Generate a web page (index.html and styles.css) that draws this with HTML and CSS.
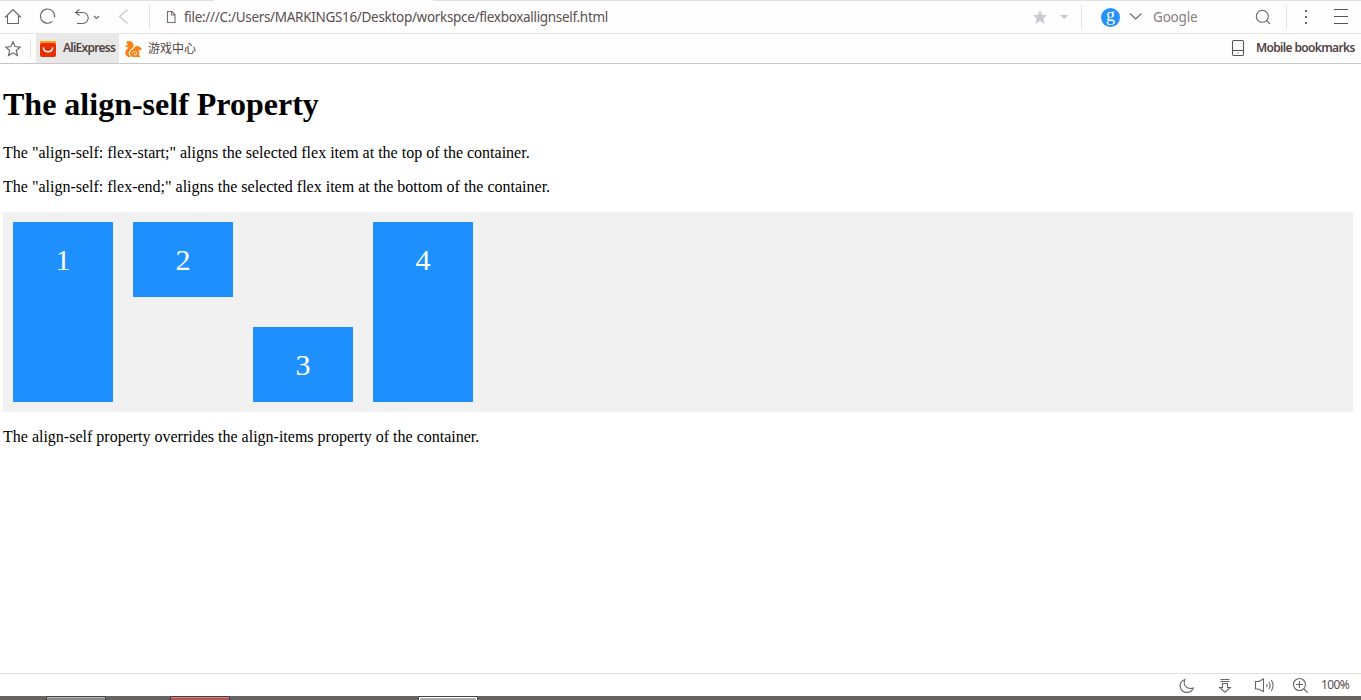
FILE: index.html
```html
<!DOCTYPE html>
<html lang="en">
<head>
<meta charset="utf-8">
<title>The align-self Property</title>
<link rel="stylesheet" href="styles.css">
</head>
<body>
<div class="tabs-edge"><span class="active-tab"></span></div>
<header class="toolbar">
  <svg class="icon" width="30" height="32" viewBox="0 1 30 32"><path d="M5 17.5 13 9.5 21 17.5M7.5 16V23.5H18.5V16"/></svg>
  <svg class="icon" width="35" height="32" viewBox="30 1 35 32"><path d="M52.4 21.3A7.1 7.1 0 1 1 54.5 17.3"/></svg>
  <svg class="icon" width="44" height="32" viewBox="65 1 44 32"><path d="M75.5 12.5H82.7A5.5 5.5 0 0 1 82.7 23.5H77M79.5 9.5 75.5 12.5 79.5 15.5"/><path d="M94 16 96.5 18.5 99 16"/></svg>
  <svg class="icon pale" width="40" height="32" viewBox="109 1 40 32"><path d="M127.5 9.5 119.5 16.5 127.5 23.5"/></svg>
  <span class="divider"></span>
  <svg class="icon brown" width="34" height="32" viewBox="150 1 34 32"><path d="M167.5 11.5H172L175 14.5V22.5H167.5ZM171.5 11.5V15H175"/></svg>
  <span class="url">file:///C:/Users/MARKINGS16/Desktop/workspce/flexboxallignself.html</span>
  <svg width="57" height="32" viewBox="1024 1 57 32" fill="#c7cad3"><path d="M1040 10 1042 14.8 1047.2 15.2 1043.2 18.6 1044.5 23.8 1040 21 1035.5 23.8 1036.8 18.6 1032.8 15.2 1038 14.8Z"/><path d="M1060 15H1068.5L1064.2 19Z"/></svg>
  <span class="divider"></span>
  <span class="engine">g</span>
  <svg class="icon" width="33" height="32" viewBox="1120 1 33 32"><path d="M1130 13.5 1135.7 19 1141.4 13.5"/></svg>
  <span class="query">Google</span>
  <svg class="icon" width="36" height="32" viewBox="1250 1 36 32"><circle cx="1262.3" cy="16.3" r="6"/><path d="M1266.7 20.7 1270 24"/></svg>
  <span class="divider"></span>
  <svg width="37" height="32" viewBox="1287 1 37 32" fill="#666"><path d="M1305 10h2v2h-2zM1305 16h2v2h-2zM1305 22h2v2h-2z"/></svg>
  <svg class="icon dark" width="37" height="32" viewBox="1324 1 37 32"><path d="M1334 9.5H1348M1334 16.5H1348M1334 23.5H1348"/></svg>
</header>
<nav class="bookmarks">
  <svg class="icon" width="30" height="29" viewBox="0 34 30 29"><path d="M13 41.8 15.1 46.6 20.2 47.1 16.3 50.5 17.5 55.5 13 52.8 8.5 55.5 9.7 50.5 5.8 47.1 10.9 46.6Z"/></svg>
  <span class="divider mini"></span>
  <span class="bookmark selected">
    <svg width="16" height="16" viewBox="0 0 16 16"><rect width="16" height="16" rx="2" fill="#e62e04"/><path d="M0 3V2Q0 0 2 0H14Q16 0 16 2V3Q14 2 12 2H4Q2 2 0 3Z" fill="#ff9a15"/><path d="M3.3 6.3C4 12.3 12 12.3 12.7 6.3" fill="none" stroke="#fff" stroke-width="1.5"/></svg>
    <span class="ali">AliExpress</span>
  </span>
  <span class="bookmark games">
    <svg width="17" height="16" viewBox="125 40 17 16"><path d="M126.6 40.4C130 39.4 133.6 41.2 133.6 44.4 133.6 47.4 129.4 48.4 128.8 51.4 128.5 53.2 129.4 54.8 131 56H128.4C125.4 54.8 124.4 51.4 126.2 49L128.6 46.4C127.2 46.6 125.8 46 125 44.8 126.4 44.8 127.4 44.4 128 43.6 127 43.2 126.4 42 126.6 40.4Z" fill="#f58213"/><path d="M129.9 52.2C130 49 133.8 48.4 134.4 46.2 135.6 45 137.4 44.6 139 45.4L141.8 47.6C141.6 49 140 49.6 138 49.4 139.6 50.8 139.8 52.6 139 54.2L140.8 56H132.8C131 55.4 129.9 54 129.9 52.2Z" fill="#f58213"/><path d="M132 52.4C132 50 136.6 49.8 136.8 52.4 136.8 54.4 133.8 54.4 134 52.6" fill="none" stroke="#fff" stroke-width=".9"/></svg>
    <span class="cn">游戏中心</span>
  </span>
  <span class="spacer"></span>
  <svg class="icon dark" width="32" height="29" viewBox="1224 34 32 29"><rect x="1232.5" y="40.5" width="11" height="15" rx="1.2"/><path d="M1232.5 50.5H1243.5"/><path d="M1237.5 53H1238.5"/></svg>
  <span class="mobile">Mobile bookmarks</span>
</nav>
<main class="page">
  <h1 class="title">The align-self Property</h1>
  <p class="text">The "align-self: flex-start;" aligns the selected flex item at the top of the container.</p>
  <p class="text">The "align-self: flex-end;" aligns the selected flex item at the bottom of the container.</p>
  <div class="flex-container">
    <div class="item">1</div>
    <div class="item start">2</div>
    <div class="item end">3</div>
    <div class="item">4</div>
  </div>
  <p class="text">The align-self property overrides the align-items property of the container.</p>
</main>
<footer class="status">
  <svg class="icon" width="36" height="22" viewBox="1170 674 36 22"><path d="M1184.8 679.5C1177.5 682.5 1179.5 692.5 1187 692.4 1190 692.4 1192.3 690.8 1193.2 688 1187 690 1182.5 685.2 1184.8 679.5Z"/></svg>
  <svg class="icon" width="38" height="22" viewBox="1206 674 38 22"><path d="M1220.5 679.5H1229.5M1220.5 681.5H1229.5M1222.5 683.5H1227.5V687.5H1230.3L1225 692.3 1219.7 687.5H1222.5Z"/></svg>
  <svg class="icon" width="43" height="22" viewBox="1244 674 43 22"><path d="M1255.5 681.5H1258.5L1263.5 679V691.5L1258.5 689H1255.5ZM1266.5 684Q1267.7 685.5 1266.5 687.2M1269 682Q1271.3 685.5 1269 689M1271.3 680Q1274.8 685.5 1271.3 691"/></svg>
  <svg class="icon" width="34" height="22" viewBox="1287 674 34 22"><circle cx="1299.5" cy="684.5" r="6"/><path d="M1299.5 681V688M1296 684.5H1303M1304 689 1307.5 692.5"/></svg>
  <span class="zoom">100%</span>
</footer>
<div class="taskbar"><span class="task"></span><span class="task alert"></span><span class="task current"></span></div>
</body>
</html>
```
FILE: styles.css
```css
* { box-sizing: border-box; }
body {
  margin: 0;
  width: 1361px;
  height: 700px;
  overflow: hidden;
  display: flex;
  flex-direction: column;
  background: #fff;
}
svg { display: block; flex: none; }
.icon { fill: none; stroke: #666; stroke-width: 1.1; }
.pale { stroke: #c4c4c4; }
.brown { stroke: #776d6d; }
.dark { stroke: #555; }
.tabs-edge { height: 1px; background: #dfdfe4; flex: none; }
.active-tab { display: block; width: 219px; height: 1px; margin-left: 214px; background: #fff; }
.toolbar {
  height: 33px;
  flex: none;
  display: flex;
  align-items: center;
  border-bottom: 1px solid #e6e6e6;
  background: #fefefe;
  font: 13.5px/20px "Noto Sans", sans-serif;
  white-space: nowrap;
}
.divider { width: 1px; height: 24px; background: #e2e2e5; flex: none; }
.url { width: 840px; color: #5a4f4f; letter-spacing: -0.31px; }
.engine {
  width: 19px;
  height: 19px;
  margin: 0 0 0 19px;
  border-radius: 50%;
  background: #2592fb;
  color: #fff;
  text-align: center;
  font: 18px/14px "Liberation Serif", serif;
}
.query { width: 97px; color: #858080; letter-spacing: -0.2px; }
.bookmarks {
  height: 30px;
  flex: none;
  display: flex;
  align-items: center;
  border-bottom: 1px solid #c8c8c8;
  background: #fefefe;
  color: #51433f;
  font: 12px/18px "Noto Sans", sans-serif;
  white-space: nowrap;
}
.mini { height: 20px; }
.bookmark { height: 29px; display: flex; align-items: center; }
.selected { width: 83px; margin-left: 5px; padding-left: 4px; gap: 7px; background: #e8e8e8; }
.ali, .mobile { padding-bottom: 2px; font-weight: 600; }
.ali { letter-spacing: -0.75px; }
.games { margin-left: 6px; gap: 6px; }
.cn { padding-bottom: 2px; font-family: "Noto Sans CJK SC", sans-serif; }
.spacer { flex: 1; }
.mobile { width: 105px; letter-spacing: -0.65px; }
.page {
  flex: 1;
  min-height: 0;
  padding: 23px 8px 0 3px;
  color: #000;
  font: 16px/17px "Liberation Serif", "Times New Roman", serif;
}
.title { margin: 0 0 22px; font-size: 32px; line-height: 35px; }
.text { margin: 0 0 17px; white-space: nowrap; }
.flex-container { display: flex; height: 200px; margin-bottom: 16px; background: #f1f1f1; }
.item {
  width: 100px;
  margin: 10px;
  background: #1e90ff;
  color: #fff;
  text-align: center;
  font-size: 30px;
  line-height: 75px;
}
.start { align-self: flex-start; }
.end { align-self: flex-end; }
.status {
  height: 23px;
  flex: none;
  display: flex;
  align-items: center;
  justify-content: flex-end;
  border-top: 1px solid #e0e0e0;
  color: #5a4f4f;
  font: 12px/16px "Noto Sans", sans-serif;
}
.zoom { width: 40px; letter-spacing: -0.6px; }
.taskbar { height: 4px; flex: none; display: flex; background: #666363; }
.task { width: 60px; height: 4px; margin-left: 46px; border: 1px solid #444; border-bottom: 0; background: #888; box-shadow: inset 0 1px #bbb; }
.alert { margin-left: 64px; background: #b85454; box-shadow: inset 0 1px #c98484; }
.current { margin-left: 188px; background: #aaa; box-shadow: inset 0 1px #fff, inset 1px 0 #fff, inset -1px 0 #fff; }
```
